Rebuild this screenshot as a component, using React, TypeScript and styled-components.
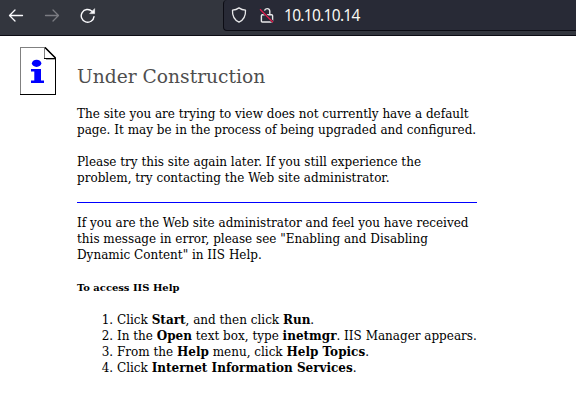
import React from 'react';
import styled, { createGlobalStyle } from 'styled-components';

const GlobalStyle = createGlobalStyle`
  * { box-sizing: border-box; }
  body { margin: 0; background: #fff; overflow: hidden; }
`;

const Page = styled.div`
  width: 576px;
  height: 403px;
  overflow: hidden;
  background: #fff;
`;

const Toolbar = styled.header`
  display: flex;
  align-items: flex-start;
  height: 36px;
  padding-left: 8px;
  background: #33363e;
  border-bottom: 1px solid #0c0c14;
`;

const NavButton = styled.button<{ $dim?: boolean }>`
  width: 16px;
  height: 16px;
  margin: 8px 20px 0 0;
  padding: 0;
  border: 0;
  background: none;
  color: ${(p) => (p.$dim ? '#7b7c82' : '#fbfbfe')};
  svg { display: block; }
`;

const AddressBar = styled.div`
  display: flex;
  flex: 1;
  height: 31px;
  margin-left: 107px;
  padding: 7px 0 0 7px;
  background: #282a36;
  border: 1px solid #0c0c14;
  border-width: 0 0 1px 1px;
  border-radius: 4px 0 0 4px;
  svg { flex: none; margin-right: 12px; }
`;

const Address = styled.span`
  margin: -1px 0 0 -3px;
  font: 15.5px/18px 'Noto Sans', sans-serif;
  letter-spacing: -0.7px;
  color: #f8f8f2;
`;

const Content = styled.main`
  display: grid;
  grid-template-columns: 36px 400px;
  column-gap: 21px;
  padding: 11px 0 0 20px;
  font: 12px/16px 'DejaVu Serif', serif;
  color: #000;
`;

const Article = styled.article`
  padding-top: 19px;
  white-space: nowrap;
`;

const Title = styled.h1`
  margin: 0 0 18px;
  font-size: 18.667px;
  line-height: 22px;
  font-weight: 400;
  color: #4e4e4e;
`;

const Paragraph = styled.p`
  margin: 0 0 16px;
`;

const Rule = styled.hr`
  height: 1px;
  margin: 0 0 12px;
  border: 0;
  background: #00f;
`;

const Subheading = styled.h2`
  margin: 0 0 16px;
  font-size: 9.96px;
  line-height: 17px;
  font-weight: 700;
`;

const Steps = styled.ol`
  margin: 0;
  padding-left: 40px;
`;

const BackIcon = () => (
  <svg width="16" height="16" viewBox="0 0 16 16" fill="none" stroke="currentColor" strokeWidth="1.3" strokeLinecap="round" strokeLinejoin="round">
    <path d="M14.5 7.5H1.6M7 2 1.5 7.5 7 13" />
  </svg>
);

const ForwardIcon = () => (
  <svg width="16" height="16" viewBox="0 0 16 16" fill="none" stroke="currentColor" strokeWidth="1.3" strokeLinecap="round" strokeLinejoin="round">
    <path d="M1.5 7.5h12.9M9 2l5.5 5.5L9 13" />
  </svg>
);

const ReloadIcon = () => (
  <svg width="16" height="16" viewBox="0 0 16 16" fill="none" stroke="currentColor" strokeWidth="1.4" strokeLinecap="round">
    <path d="M12 3.2A6.4 6.4 0 1 0 14 8.6" />
    <path d="M14.6 1v4.6H10z" fill="currentColor" strokeWidth=".6" strokeLinejoin="round" />
  </svg>
);

const ShieldIcon = () => (
  <svg width="16" height="16" viewBox="0 0 16 16" fill="none" stroke="#e8e8ea" strokeWidth="1.3" strokeLinejoin="round">
    <path d="M8 .9C6.3 2.1 3.8 3 1.5 3.2c-.3 5 1.5 9.5 6.5 11.9 5-2.4 6.8-6.9 6.5-11.9C12.2 3 9.7 2.1 8 .9z" />
  </svg>
);

const InsecureIcon = () => (
  <svg width="16" height="16" viewBox="0 0 16 16" fill="none" strokeLinejoin="round">
    <path d="M5.5 3.7A2.7 2.7 0 0 1 10.8 4v3M3.4 7.7h9.2q1 0 1 1v5.3q0 1-1 1H3.400q-1 0-1-1V8.700q0-1 1-1z" stroke="#e8e8ea" strokeWidth="1.4" />
    <path d="M1 2.200 14 15.200" stroke="#282a36" strokeWidth="2.400" />
    <path d="M1 2.200 14 15.200" stroke="#e1194b" strokeWidth="1.300" />
  </svg>
);

const InfoPageIcon = () => (
  <svg width="36" height="48" viewBox="0 0 36 48" shapeRendering="crispEdges">
    <path d="M0 0h25l11 11v37H0z" fill="#808080" />
    <path d="M1 1h23l11 11v35H1z" fill="#fff" />
    <path d="M26 12.5h9" stroke="#aaa" />
    <path d="M24.5 0v11" stroke="#808080" />
    <path d="M24 11.5h12" stroke="#000" />
    <path d="M25 .5 35.5 11" stroke="#000" strokeWidth="1.5" fill="none" shapeRendering="auto" />
    <path d="M35.5 11v37M0 47.5h36" stroke="#000" />
    <g fill="#00f" shapeRendering="auto">
      <ellipse cx="16.6" cy="16.3" rx="4.7" ry="3.6" />
      <path d="M11 22h10v11.600h3V36H11v-2.400h3.300v-9.200H11z" />
    </g>
  </svg>
);

export default function App() {
  return (
    <Page>
      <GlobalStyle />
      <Toolbar>
        <NavButton aria-label="Back"><BackIcon /></NavButton>
        <NavButton aria-label="Forward" $dim><ForwardIcon /></NavButton>
        <NavButton aria-label="Reload"><ReloadIcon /></NavButton>
        <AddressBar>
          <ShieldIcon />
          <InsecureIcon />
          <Address>10.10.10.14</Address>
        </AddressBar>
      </Toolbar>
      <Content>
        <InfoPageIcon />
        <Article>
          <Title>Under Construction</Title>
          <Paragraph>
            The site you are trying to view does not currently have a default<br />
            page. It may be in the process of being upgraded and configured.
          </Paragraph>
          <Paragraph>
            Please try this site again later. If you still experience the<br />
            problem, try contacting the Web site administrator.
          </Paragraph>
          <Rule />
          <Paragraph>
            If you are the Web site administrator and feel you have received<br />
            this message in error, please see "Enabling and Disabling<br />
            Dynamic Content" in IIS Help.
          </Paragraph>
          <Subheading>To access IIS Help</Subheading>
          <Steps>
            <li>Click <b>Start</b>, and then click <b>Run</b>.</li>
            <li>In the <b>Open</b> text box, type <b>inetmgr</b>. IIS Manager appears.</li>
            <li>From the <b>Help</b> menu, click <b>Help Topics</b>.</li>
            <li>Click <b>Internet Information Services</b>.</li>
          </Steps>
        </Article>
      </Content>
    </Page>
  );
}
